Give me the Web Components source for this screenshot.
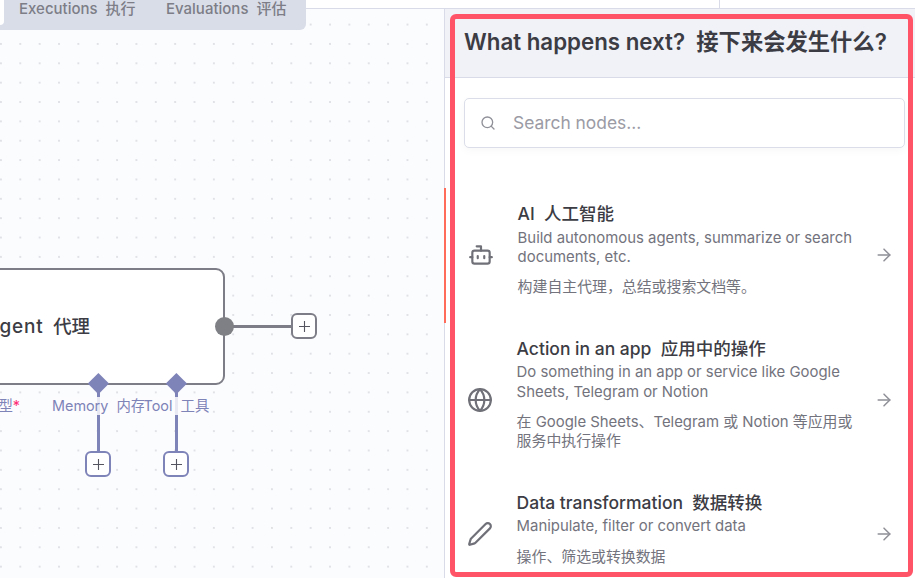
<!DOCTYPE html>
<html lang="en">
<head>
<meta charset="utf-8">
<title>What happens next?</title>
<style>
  html, body { margin: 0; height: 100%; overflow: hidden; background: #fff; }
  body { font-family: Inter, "Noto Sans CJK SC", sans-serif; }
</style>
</head>
<body>
<app-shell>
  <flow-canvas slot="canvas"></flow-canvas>
  <next-panel slot="panel">
    <node-row shift="1">
      <svg slot="icon" width="26" height="26" viewBox="0 0 24 24" fill="none" stroke="currentColor" stroke-width="2" stroke-linecap="round" stroke-linejoin="round"><path d="M12 8V4H8"/><rect x="4" y="8" width="16" height="12" rx="2"/><path d="M2 14h2"/><path d="M20 14h2"/><path d="M15 13v2"/><path d="M9 13v2"/></svg>
      <span slot="title">AI&nbsp; 人工智能</span>
      <span slot="desc">Build autonomous agents, summarize or search documents, etc.</span>
      <span slot="note">构建自主代理，总结或搜索文档等。</span>
    </node-row>
    <node-row>
      <svg slot="icon" width="26" height="26" viewBox="0 0 24 24" fill="none" stroke="currentColor" stroke-width="2" stroke-linecap="round" stroke-linejoin="round"><circle cx="12" cy="12" r="10"/><path d="M12 2a14.5 14.5 0 0 0 0 20 14.5 14.5 0 0 0 0-20"/><path d="M2 12h20"/></svg>
      <span slot="title">Action in an app&nbsp; 应用中的操作</span>
      <span slot="desc">Do something in an app or service like Google Sheets, Telegram or Notion</span>
      <span slot="note">在 Google Sheets、Telegram 或 Notion 等应用或服务中执行操作</span>
    </node-row>
    <node-row>
      <svg slot="icon" width="26" height="26" viewBox="0 0 24 24" fill="none" stroke="currentColor" stroke-width="2" stroke-linecap="round" stroke-linejoin="round"><path d="M21.174 6.812a1 1 0 0 0-3.986-3.987L3.842 16.174a2 2 0 0 0-.5.83l-1.321 4.352a.5.5 0 0 0 .623.622l4.353-1.32a2 2 0 0 0 .83-.497z"/></svg>
      <span slot="title">Data transformation&nbsp; 数据转换</span>
      <span slot="desc">Manipulate, filter or convert data</span>
      <span slot="note">操作、筛选或转换数据</span>
    </node-row>
  </next-panel>
</app-shell>

<script>
class AppShell extends HTMLElement {
  constructor() {
    super();
    this.attachShadow({ mode: 'open' }).innerHTML = `
      <style>
        :host { display: flex; flex-direction: column; width: 915px; height: 578px; position: relative; overflow: hidden; }
        .top { height: 8px; flex: none; border-bottom: 1px solid #d9dce8; display: flex; justify-content: flex-end; }
        .top i { width: 195px; border-left: 1px solid #d9dce8; }
        .main { flex: 1; min-height: 0; display: grid; grid-template-columns: 444px 1fr; }
        .highlight {
          position: absolute; left: 450px; top: 14px; width: 463px; height: 563px;
          box-sizing: border-box; border: 5px solid #ff5468; border-radius: 6px; pointer-events: none;
        }
        .edge { position: absolute; left: 444px; top: 188px; width: 2px; height: 135px; background: #ff6d5a; }
      </style>
      <div class="top"><i></i></div>
      <div class="main"><slot name="canvas"></slot><slot name="panel"></slot></div>
      <view-tabs></view-tabs>
      <div class="edge"></div>
      <div class="highlight"></div>`;
  }
}

class ViewTabs extends HTMLElement {
  constructor() {
    super();
    this.attachShadow({ mode: 'open' }).innerHTML = `
      <style>
        :host {
          position: absolute; left: 0; top: 0; width: 306px; height: 30px; box-sizing: border-box;
          background: #d9dde8; border-radius: 0 0 6px 0; color: #7d7d87;
          font-size: 15px; font-weight: 500; line-height: 18px; white-space: pre; overflow: hidden;
        }
        .active { position: absolute; left: -6px; top: -4px; width: 10px; height: 29px; background: #fff; border-radius: 4px; }
        span { position: absolute; top: 0; }
      </style>
      <div class="active"></div>
      <span style="left:19px">Executions&nbsp; 执行</span>
      <span style="left:166px">Evaluations&nbsp; 评估</span>`;
  }
}

class AddButton extends HTMLElement {
  constructor() {
    super();
    this.attachShadow({ mode: 'open' }).innerHTML = `
      <style>
        :host {
          position: absolute; width: 26px; height: 26px; box-sizing: border-box; display: flex;
          align-items: center; justify-content: center; background: #fff;
          border: 2.6px solid var(--line, #7d7d87); border-radius: 6px; color: #55555f;
        }
      </style>
      <svg width="13" height="13" viewBox="0 0 13 13" stroke="currentColor" stroke-width="1.1" fill="none"><path d="M6.5 1v11M1 6.5h11"/></svg>`;
  }
}

class FlowCanvas extends HTMLElement {
  constructor() {
    super();
    this.attachShadow({ mode: 'open' }).innerHTML = `
      <style>
        :host {
          display: block; position: relative; height: 100%; overflow: hidden;
          background-color: #fbfcfe;
          background-image: radial-gradient(circle at center, #a9abb6 0.45px, transparent 0.8px);
          background-size: 19.36px 19.36px; background-position: 10.6px 5.9px;
          --sub: #7e83b8;
        }
        .node {
          position: absolute; left: -100px; top: 259px; width: 325px; height: 117px; box-sizing: border-box;
          background: #fff; border: 2px solid #7d7d87; border-radius: 9px;
          display: flex; align-items: center; justify-content: flex-end; padding: 0 133px 4px 0;
          font-size: 18.4px; font-weight: 500; color: #3c3c44; white-space: pre;
        }
        .node b { font-weight: 500; font-size: 19px; letter-spacing: .8px; }
        .dot { position: absolute; left: 214.5px; top: 307.5px; width: 19px; height: 19px; border-radius: 50%; background: #7f8085; }
        .wire { position: absolute; background: #7d7d87; }
        .sub { background: var(--sub); width: 2.6px; top: 383px; height: 60px; }
        .diamond { position: absolute; top: 366.9px; width: 14.8px; height: 14.8px; background: var(--sub); transform: rotate(45deg); }
        .label {
          position: absolute; top: 388px; font-size: 14.4px; line-height: 18px; color: var(--sub); white-space: pre;
          background: rgba(251, 252, 254, .85);
        }
        .req { color: #ff2d78; }
        add-button.s { --line: var(--sub); }
      </style>
      <div class="node"><span><b>AI Agent</b>&nbsp; 代理</span></div>
      <div class="wire" style="left:233px;top:315.5px;width:60px;height:3px"></div>
      <div class="dot"></div>
      <add-button style="left:291px;top:304px"></add-button>
      <div class="wire sub" style="left:97px"></div>
      <div class="wire sub" style="left:175px"></div>
      <div class="diamond" style="left:90.9px"></div>
      <div class="diamond" style="left:168.6px"></div>
      <div class="label" style="right:424px">Chat Model&nbsp; 聊天模型<span class="req">*</span></div>
      <div class="label" style="left:52px">Memory&nbsp; 内存</div>
      <div class="label" style="left:143.5px">Tool&nbsp; 工具</div>
      <add-button class="s" style="left:85px;top:442px"></add-button>
      <add-button class="s" style="left:163px;top:442px"></add-button>`;
  }
}

class NextPanel extends HTMLElement {
  constructor() {
    super();
    this.attachShadow({ mode: 'open' }).innerHTML = `
      <style>
        :host { display: flex; flex-direction: column; height: 100%; background: #fff; border-left: 1px solid #d9dce8; overflow: hidden; }
        header {
          flex: none; height: 69px; box-sizing: border-box; background: #f0f2f8; border-bottom: 1px solid #d9dce8;
          padding: 18px 0 0 19px; font-size: 22.3px; line-height: 30px; font-weight: 600; color: #3c3c44; white-space: pre;
        }
        .body { padding: 20px 10px 0 19px; }
        .search {
          height: 50px; box-sizing: border-box; border: 1px solid #dbdee8; border-radius: 5px; background: #fff;
          box-shadow: 0 3px 8px rgba(68, 28, 23, .03);
          display: flex; align-items: center; gap: 17px; padding: 0 0 1px 15px;
          color: #9b9ba5; font-size: 17.4px;
        }
        .search svg { flex: none; color: #8f9098; }
        .list { display: flex; flex-direction: column; gap: 30.5px; padding-top: 55px; }
      </style>
      <header>What happens next?&nbsp; 接下来会发生什么?</header>
      <div class="body">
        <div class="search">
          <svg width="16" height="16" viewBox="0 0 24 24" fill="none" stroke="currentColor" stroke-width="2" stroke-linecap="round" stroke-linejoin="round"><circle cx="11" cy="11" r="8"/><path d="m21 21-4.3-4.3"/></svg>
          <span>Search nodes...</span>
        </div>
        <div class="list"><slot></slot></div>
      </div>`;
  }
}

class NodeRow extends HTMLElement {
  constructor() {
    super();
    this.attachShadow({ mode: 'open' }).innerHTML = `
      <style>
        :host { display: flex; align-items: center; }
        .icon { flex: none; width: 26px; height: 26px; margin-left: calc(3px + var(--shift, 0px)); color: #6f7078; display: flex; }
        .text { flex: none; width: 342px; margin-left: 23.6px; padding-bottom: 9.5px; }
        .title { font-size: 17.5px; line-height: 22px; font-weight: 500; color: #3c3c44; margin-bottom: 3.6px; white-space: pre; }
        .desc, .note { font-size: 14.9px; line-height: 19.5px; color: #73737d; }
        .note { margin-top: 10.6px; }
        .arrow { flex: none; margin-left: calc(15px - var(--shift, 0px)); color: #8f8f98; display: flex; }
      </style>
      <div class="icon"><slot name="icon"></slot></div>
      <div class="text">
        <div class="title"><slot name="title"></slot></div>
        <div class="desc"><slot name="desc"></slot></div>
        <div class="note"><slot name="note"></slot></div>
      </div>
      <div class="arrow"><svg width="20" height="20" viewBox="0 0 24 24" fill="none" stroke="currentColor" stroke-width="1.8" stroke-linecap="round" stroke-linejoin="round"><path d="M5 12h14"/><path d="m12 5 7 7-7 7"/></svg></div>`;
    if (this.hasAttribute('shift')) this.style.setProperty('--shift', this.getAttribute('shift') + 'px');
  }
}

customElements.define('view-tabs', ViewTabs);
customElements.define('add-button', AddButton);
customElements.define('flow-canvas', FlowCanvas);
customElements.define('node-row', NodeRow);
customElements.define('next-panel', NextPanel);
customElements.define('app-shell', AppShell);
</script>
</body>
</html>
